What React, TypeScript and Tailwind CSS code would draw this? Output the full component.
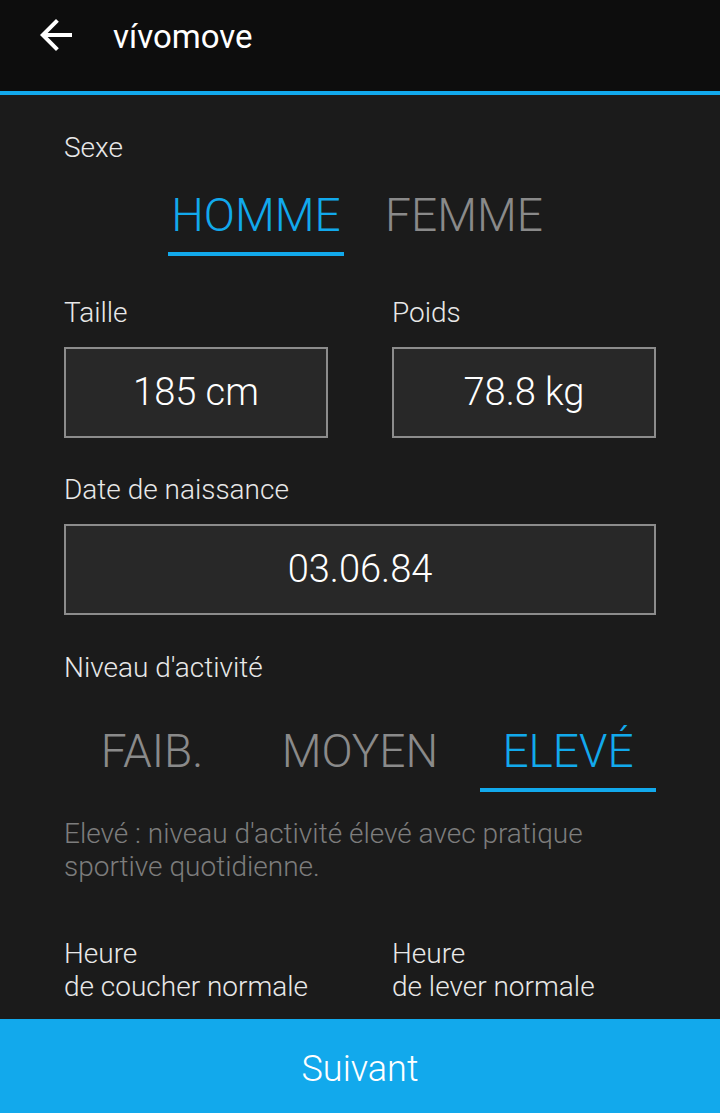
import React from "react";

const Tab = ({ label, active }: { label: string; active?: boolean }) => {
  return (
    <div className="flex w-[176px] flex-col items-center">
      <span
        className={
          "text-[46px] font-light leading-[46px] " +
          (active ? "text-[#12a9ec]" : "text-[#8a8a8a]")
        }
      >
        {label}
      </span>
      <div
        className={"mt-[14px] h-[4px] w-full " + (active ? "bg-[#12a9ec]" : "bg-transparent")}
      />
    </div>
  );
};

const Label = ({ children }: { children: React.ReactNode }) => (
  <div className="text-[28px] font-light leading-[30px] text-[#e8e8e8]">{children}</div>
);

const ValueBox = ({ value }: { value: string }) => (
  <div className="flex h-[91px] items-center justify-center border-2 border-[#8c8c8c] bg-[#282828] text-[38px] font-light text-white">
    {value}
  </div>
);

export default function App() {
  return (
    <div
      className="flex h-screen flex-col bg-[#1b1b1b]"
      style={{ fontFamily: "Roboto, 'Liberation Sans', sans-serif" }}
    >
      <header className="flex h-[95px] shrink-0 items-start border-b-4 border-[#12a9ec] bg-[#0d0d0d]">
        <svg viewBox="0 0 24 24" className="ml-[32px] mt-[11px] h-[48px] w-[48px] fill-white">
          <path d="M20 11H7.83l5.59-5.59L12 4l-8 8 8 8 1.41-1.41L7.83 13H20v-2z" />
        </svg>
        <h1 className="ml-[33px] mt-[17px] text-[33px] font-normal leading-[40px] text-white">
          vívomove
        </h1>
      </header>

      <main className="flex-1 overflow-hidden px-16 pt-[38px]">
        <Label>Sexe</Label>
        <div className="mt-[29px] flex justify-center gap-8">
          <Tab label="HOMME" active />
          <Tab label="FEMME" />
        </div>

        <div className="mt-[42px] grid grid-cols-2 gap-x-16">
          <div>
            <Label>Taille</Label>
            <div className="mt-[19px]">
              <ValueBox value="185 cm" />
            </div>
          </div>
          <div>
            <Label>Poids</Label>
            <div className="mt-[19px]">
              <ValueBox value="78.8 kg" />
            </div>
          </div>
        </div>

        <div className="mt-[37px]">
          <Label>Date de naissance</Label>
          <div className="mt-[19px]">
            <ValueBox value="03.06.84" />
          </div>
        </div>

        <div className="mt-[38px]">
          <Label>Niveau d'activité</Label>
        </div>
        <div className="mt-[45px] flex justify-between">
          <Tab label="FAIB." />
          <Tab label="MOYEN" />
          <Tab label="ELEVÉ" active />
        </div>

        <p className="mt-[25px] text-[28px] font-light leading-[33px] text-[#7d7d7d]">
          Elevé : niveau d'activité élevé avec pratique sportive quotidienne.
        </p>

        <div className="mt-[54px] grid grid-cols-2 gap-x-16 text-[28px] font-light leading-[33px] text-[#e8e8e8]">
          <div>
            Heure
            <br />
            de coucher normale
          </div>
          <div>
            Heure
            <br />
            de lever normale
          </div>
        </div>
      </main>

      <button className="flex h-[94px] shrink-0 items-center justify-center bg-[#12a9ec] pt-[5px] text-[36px] font-light text-white">
        Suivant
      </button>
    </div>
  );
}
